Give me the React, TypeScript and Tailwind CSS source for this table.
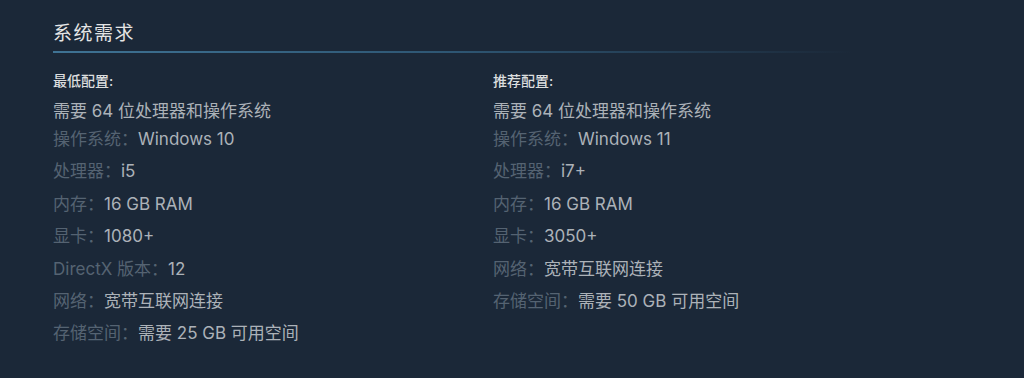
const minimum = [
  { label: '操作系统：', value: 'Windows 10' },
  { label: '处理器：', value: 'i5' },
  { label: '内存：', value: '16 GB RAM' },
  { label: '显卡：', value: '1080+' },
  { label: 'DirectX 版本：', value: '12' },
  { label: '网络：', value: '宽带互联网连接' },
  { label: '存储空间：', value: '需要 25 GB 可用空间' },
];

const recommended = [
  { label: '操作系统：', value: 'Windows 11' },
  { label: '处理器：', value: 'i7+' },
  { label: '内存：', value: '16 GB RAM' },
  { label: '显卡：', value: '3050+' },
  { label: '网络：', value: '宽带互联网连接' },
  { label: '存储空间：', value: '需要 50 GB 可用空间' },
];

type Row = { label: string; value: string };

const ReqColumn = ({ title, rows }: { title: string; rows: Row[] }) => (
  <div>
    <div className="text-[14px] leading-[18px] font-medium text-[#dcdedf]">{title}</div>
    <ul className="mt-[10px] text-[17px] text-[#acb2b8]">
      <li className="leading-[22px]">需要 64 位处理器和操作系统</li>
      {rows.map(row => (
        <li key={row.label} className="leading-[32.4px] whitespace-nowrap [&:nth-child(2)]:mt-[1px]">
          <span className="text-[#556372]">{row.label}</span>
          {row.value}
        </li>
      ))}
    </ul>
  </div>
);

export default function App() {
  return (
    <div
      className="w-[1024px] h-[378px] overflow-hidden bg-[#1b2838] pl-[53px] pt-[22px]"
      style={{ fontFamily: 'Inter, "Noto Sans CJK SC", "Noto Sans", sans-serif' }}
    >
      <h2 className="text-[19px] leading-[24px] tracking-[1.5px] text-[#e5e5e5]">系统需求</h2>
      <div className="mt-[5px] h-[2px] w-[800px] bg-gradient-to-r from-[#3f7394] via-[#2e5673] to-transparent" />
      <div className="mt-[19px] grid grid-cols-[440px_440px]">
        <ReqColumn title="最低配置:" rows={minimum} />
        <ReqColumn title="推荐配置:" rows={recommended} />
      </div>
    </div>
  );
}
